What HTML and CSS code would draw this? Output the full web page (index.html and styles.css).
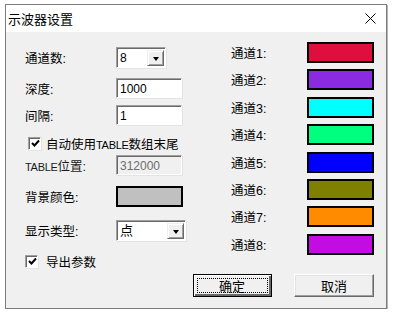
FILE: index.html
```html
<!DOCTYPE html>
<html lang="zh-CN">
<head>
<meta charset="utf-8">
<title>示波器设置</title>
<link rel="stylesheet" href="styles.css">
</head>
<body>
<div class="window">
  <div class="titlebar">
    <span class="title">示波器设置</span>
    <svg class="close" width="11" height="11" viewBox="0 0 11 11"><path d="M0.5 0.5 L10.5 10.5 M10.5 0.5 L0.5 10.5" stroke="#000" stroke-width="1" fill="none"/></svg>
  </div>
  <div class="content">
    <div class="left">
      <div class="row r1"><span class="label">通道数:</span><div class="combo w50"><span class="val">8</span><span class="drop"><i></i></span></div></div>
      <div class="row r2"><span class="label">深度:</span><div class="edit">1000</div></div>
      <div class="row r3"><span class="label">间隔:</span><div class="edit">1</div></div>
      <div class="row r4 check"><span class="box"><svg width="9" height="9" viewBox="0 0 9 9"><path d="M1 4 L3.5 6.5 L8 1.5" stroke="#000" stroke-width="2" fill="none"/></svg></span><span>自动使用<span class="latin">TABLE</span>数组末尾</span></div>
      <div class="row r5"><span class="label"><span class="latin">TABLE</span>位置:</span><div class="edit disabled">312000</div></div>
      <div class="row r6"><span class="label">背景颜色:</span><div class="swatch bg"></div></div>
      <div class="row r7"><span class="label">显示类型:</span><div class="combo w70"><span class="val">点</span><span class="drop"><i></i></span></div></div>
      <div class="row r8 check export"><span class="box"><svg width="9" height="9" viewBox="0 0 9 9"><path d="M1 4 L3.5 6.5 L8 1.5" stroke="#000" stroke-width="2" fill="none"/></svg></span><span>导出参数</span></div>
    </div>
    <div class="right">
      <div class="channels">
        <div class="ch"><span class="chlabel">通道1:</span><div class="swatch" style="background:#e00e3c"></div></div>
        <div class="ch"><span class="chlabel">通道2:</span><div class="swatch" style="background:#8a2be2"></div></div>
        <div class="ch"><span class="chlabel">通道3:</span><div class="swatch" style="background:#00ffff"></div></div>
        <div class="ch"><span class="chlabel">通道4:</span><div class="swatch" style="background:#00ff7f"></div></div>
        <div class="ch"><span class="chlabel">通道5:</span><div class="swatch" style="background:#0000ff"></div></div>
        <div class="ch"><span class="chlabel">通道6:</span><div class="swatch" style="background:#808000"></div></div>
        <div class="ch"><span class="chlabel">通道7:</span><div class="swatch" style="background:#ff8c00"></div></div>
        <div class="ch"><span class="chlabel">通道8:</span><div class="swatch" style="background:#c20ce2"></div></div>
      </div>
      <div class="buttons">
        <button class="btn default"><span class="focus">确定</span></button>
        <button class="btn">取消</button>
      </div>
    </div>
  </div>
</div>
</body>
</html>
```
FILE: styles.css
```css
html, body {
  margin: 0;
  padding: 0;
  background: #ffffff;
}
body {
  font-family: "Liberation Sans", "Noto Sans CJK SC", sans-serif;
  font-size: 12px;
  color: #000;
}
.window {
  margin: 4px 0 0 5px;
  width: 380px;
  height: 303px;
  border: 1px solid #7d7d7d;
  box-shadow: 1px 1px 0 #b4b4b4;
  display: flex;
  flex-direction: column;
  background: #f0f0f0;
}
.titlebar {
  height: 27px;
  background: #ffffff;
  display: flex;
  align-items: center;
  justify-content: space-between;
  padding: 0 10px 0 2px;
  flex: none;
}
.title {
  font-size: 13px;
  font-family: "Noto Sans CJK SC", sans-serif;
  margin-top: -1px;
}
.close {
  display: block;
  margin-top: -1px;
}
.content {
  flex: 1;
  display: flex;
  justify-content: space-between;
  padding: 0 12px 0 19px;
}
.left {
  width: 168px;
  display: flex;
  flex-direction: column;
}
.row {
  display: flex;
  align-items: center;
  height: 20px;
}
.label {
  width: 91px;
  flex: none;
  white-space: nowrap;
  font-size: 12.5px;
}
.latin {
  font-family: "Liberation Sans", sans-serif;
  font-size: 11px;
  letter-spacing: -0.3px;
}
.r1 { margin-top: 15px; height: 21px; }
.r2 { margin-top: 10px; }
.r3 { margin-top: 7px; }
.r4 { margin-top: 8px; }
.r5 { margin-top: 2px; }
.r6 { margin-top: 11px; }
.r7 { margin-top: 14px; height: 21px; }
.r8 { margin-top: 10px; }
.r5 .label { color: #1a1a1a; }
.edit {
  box-sizing: border-box;
  width: 66px;
  height: 20px;
  background: #fff;
  border-top: 1px solid #a0a0a0;
  border-left: 1px solid #a0a0a0;
  border-right: 1px solid #ffffff;
  border-bottom: 1px solid #ffffff;
  box-shadow: inset 1px 1px 0 #696969, 1px 1px 0 #e3e3e3;
  padding: 3px 0 0 3px;
  font-size: 12px;
  line-height: 14px;
}
.edit.disabled {
  background: #f0f0f0;
  color: #6d6d6d;
}
.combo {
  box-sizing: border-box;
  height: 21px;
  background: #fff;
  border-top: 1px solid #a0a0a0;
  border-left: 1px solid #a0a0a0;
  border-right: 1px solid #ffffff;
  border-bottom: 1px solid #ffffff;
  box-shadow: inset 1px 1px 0 #696969, 1px 1px 0 #e3e3e3;
  display: flex;
  align-items: stretch;
  padding: 2px 1px 1px 2px;
}
.w50 { width: 50px; }
.w70 { width: 70px; }
.combo .val {
  flex: 1;
  padding-left: 1px;
  line-height: 16px;
  font-family: "Liberation Sans", "Noto Sans CJK SC", sans-serif;
}
.w70 .val { font-size: 13px; }
.drop {
  width: 17px;
  box-sizing: border-box;
  background: #f0f0f0;
  border-top: 1px solid #f0f0f0;
  border-left: 1px solid #f0f0f0;
  border-right: 1px solid #696969;
  border-bottom: 1px solid #696969;
  box-shadow: inset 1px 1px 0 #ffffff, inset -1px -1px 0 #a0a0a0;
  display: flex;
  align-items: center;
  justify-content: center;
}
.drop i {
  display: block;
  width: 0;
  height: 0;
  border-left: 3.5px solid transparent;
  border-right: 3.5px solid transparent;
  border-top: 4px solid #000;
  margin-top: 1px;
}
.check {
  padding-left: 3px;
  font-family: "Noto Sans CJK SC", sans-serif;
  font-size: 12.5px;
}
.check.export { padding-left: 0; }
.box {
  box-sizing: border-box;
  width: 13px;
  height: 13px;
  background: #fff;
  border-top: 1px solid #a0a0a0;
  border-left: 1px solid #a0a0a0;
  border-right: 1px solid #ffffff;
  border-bottom: 1px solid #ffffff;
  box-shadow: inset 1px 1px 0 #696969, 1px 1px 0 #e3e3e3;
  display: flex;
  align-items: center;
  justify-content: center;
  margin-right: 5px;
  flex: none;
}
.box svg { display: block; margin: 1px 0 0 1px; }
.export .box { margin-right: 8px; }
.swatch {
  box-sizing: border-box;
  width: 67px;
  height: 21px;
  border: 2px solid #000;
  background: #c0c0c0;
}
.right {
  width: 182px;
  display: flex;
  flex-direction: column;
}
.channels {
  margin-top: 10px;
  display: flex;
  flex-direction: column;
  gap: 6.4px;
}
.ch {
  display: flex;
  justify-content: flex-end;
  align-items: center;
  font-size: 12.5px;
}
.chlabel {
  width: 76px;
}
.buttons {
  margin-top: 19px;
  display: flex;
  justify-content: space-between;
}
.btn {
  box-sizing: border-box;
  width: 80px;
  height: 23px;
  font-family: "Noto Sans CJK SC", sans-serif;
  font-size: 13px;
  background: #f0f0f0;
  border-top: 1px solid #ffffff;
  border-left: 1px solid #ffffff;
  border-right: 1px solid #696969;
  border-bottom: 1px solid #696969;
  box-shadow: inset -1px -1px 0 #a0a0a0, inset 1px 1px 0 #e3e3e3;
  padding: 0;
  color: #000;
  display: flex;
  align-items: center;
  justify-content: center;
}
.btn.default {
  border: 1px solid #000;
  box-shadow: inset 1px 1px 0 #ffffff, inset -2px -2px 0 #696969;
  padding: 3px;
  width: 79px;
}
.btn .focus {
  flex: 1;
  align-self: stretch;
  border: 1px dotted #000;
  display: flex;
  align-items: center;
  justify-content: center;
}
```
